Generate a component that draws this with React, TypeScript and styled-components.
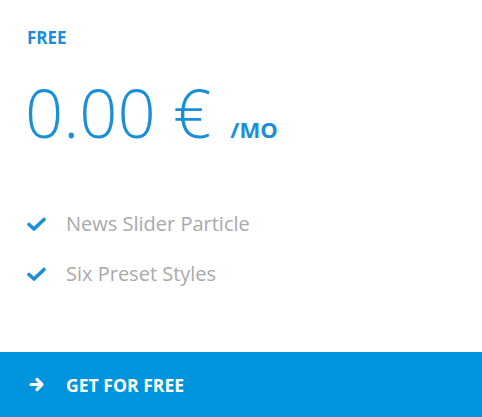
import React from "react";
import styled, { createGlobalStyle } from "styled-components";

const Global = createGlobalStyle`
  html, body { margin: 0; padding: 0; background: #fff; }
  body { font-family: "Open Sans", "Liberation Sans", sans-serif; }
`;

const Card = styled.div`
  width: 482px;
  height: 417px;
  display: flex;
  flex-direction: column;
  background: #fff;
`;

const Body = styled.div`
  flex: 1;
  padding: 27px 27px 0 27px;
  display: flex;
  flex-direction: column;
`;

const Plan = styled.div`
  color: #1a8fd6;
  font-weight: 700;
  font-size: 17px;
  line-height: 22px;
`;

const PriceRow = styled.div`
  display: flex;
  align-items: baseline;
  margin-top: 23px;
  color: #1a8fd6;
`;

const Amount = styled.span`
  font-weight: 300;
  font-size: 67px;
  line-height: 80px;
  margin-left: -2px;
`;

const Period = styled.span`
  font-weight: 700;
  font-size: 22px;
  margin-left: 19px;
`;

const Features = styled.ul`
  list-style: none;
  margin: 58px 0 0 0;
  padding: 0;
  display: flex;
  flex-direction: column;
  gap: 22px;
`;

const Feature = styled.li`
  display: flex;
  align-items: center;
  color: #aaaaaa;
  font-size: 20px;
  line-height: 28px;
`;

const IconBox = styled.span`
  width: 39px;
  display: inline-flex;
  align-items: center;
`;

const Button = styled.button`
  height: 65px;
  width: 100%;
  border: none;
  background: #0094dc;
  color: #fff;
  display: flex;
  align-items: center;
  padding: 0 0 0 29px;
  font-family: "Open Sans", "Liberation Sans", sans-serif;
  font-weight: 700;
  font-size: 17.6px;
  cursor: pointer;
  text-align: left;
`;

const ButtonIcon = styled.span`
  width: 37px;
  display: inline-flex;
  align-items: center;
`;

const Check = () => (
  <svg width="19" height="15" viewBox="0 0 19 15">
    <path d="M2 7.5 L7 12 L17 2.5" fill="none" stroke="#1a8fd6" strokeWidth="3.6" strokeLinecap="round" strokeLinejoin="round" />
  </svg>
);

const Arrow = () => (
  <svg width="16" height="15" viewBox="0 0 16 15">
    <path d="M2 7.5 H13 M8 2.5 L13 7.5 L8 12.5" fill="none" stroke="#fff" strokeWidth="3.2" strokeLinecap="round" strokeLinejoin="round" />
  </svg>
);

export default function App() {
  return (
    <>
      <Global />
      <Card>
        <Body>
          <Plan>FREE</Plan>
          <PriceRow>
            <Amount>0.00 €</Amount>
            <Period>/MO</Period>
          </PriceRow>
          <Features>
            <Feature>
              <IconBox><Check /></IconBox>
              News Slider Particle
            </Feature>
            <Feature>
              <IconBox><Check /></IconBox>
              Six Preset Styles
            </Feature>
          </Features>
        </Body>
        <Button>
          <ButtonIcon><Arrow /></ButtonIcon>
          GET FOR FREE
        </Button>
      </Card>
    </>
  );
}
